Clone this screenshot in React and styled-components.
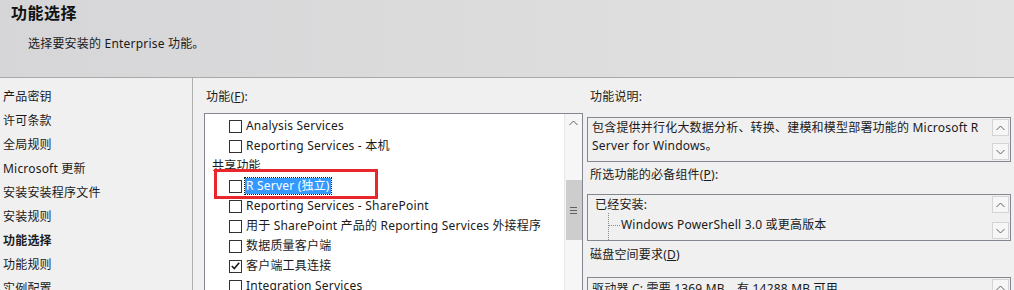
import styled, { createGlobalStyle } from 'styled-components';

const GlobalStyle = createGlobalStyle`
  html, body {
    margin: 0;
    padding: 0;
    background: #f0f0f0;
    overflow: hidden;
  }
  body {
    font-family: "Noto Sans", "Noto Sans CJK SC", sans-serif;
    font-size: 12px;
    letter-spacing: 0.2px;
    color: #1a1a1a;
  }
  * { box-sizing: border-box; }
`;

const Page = styled.div`
  width: 1014px;
  height: 290px;
  display: flex;
  flex-direction: column;
  overflow: hidden;
`;

const Header = styled.div`
  height: 78px;
  flex-shrink: 0;
  padding: 3px 11px 0;
  background: linear-gradient(to right, #d6d6d8, #e2e2e2);
  border-bottom: 1px solid #a9a9a9;
`;

const Title = styled.div`
  font-size: 16px;
  font-weight: bold;
  line-height: 20px;
  letter-spacing: 0.5px;
  color: #111;
`;

const Subtitle = styled.div`
  margin: 13px 0 0 17px;
  line-height: 16px;
`;

const Body = styled.div`
  flex: 1;
  min-height: 0;
  display: flex;
  overflow: hidden;
`;

const Nav = styled.div`
  width: 193px;
  flex-shrink: 0;
  padding-top: 7px;
  border-right: 1px solid #b0b0b0;
`;

const NavItem = styled.div`
  line-height: 24px;
  padding-left: 3px;
  white-space: nowrap;
  font-weight: ${(p) => (p.$active ? 'bold' : 'normal')};
`;

const FeatureColumn = styled.div`
  width: 379px;
  flex-shrink: 0;
  margin-left: 11px;
  padding-top: 11px;
  display: flex;
  flex-direction: column;
`;

const FieldLabel = styled.div`
  line-height: 16px;
  padding-left: ${(p) => p.$indent || 0}px;
  margin-top: ${(p) => p.$top || 0}px;
  margin-bottom: ${(p) => p.$bottom || 0}px;
  white-space: nowrap;
  u { text-decoration: underline; }
`;

const ListBox = styled.div`
  position: relative;
  flex: 1;
  display: flex;
  background: #fff;
  border: 1px solid #828790;
  border-bottom: none;
`;

const ListRows = styled.div`
  flex: 1;
  padding-top: 2px;
  overflow: hidden;
`;

const Row = styled.div`
  height: 20px;
  display: flex;
  align-items: center;
  padding-left: ${(p) => p.$indent}px;
  white-space: nowrap;
`;

const Checkbox = styled.span`
  width: 13px;
  height: 13px;
  flex-shrink: 0;
  margin-right: 3px;
  border: 1px solid #333;
  background: #fff;
  display: flex;
  align-items: center;
  justify-content: center;
`;

const ItemText = styled.span`
  line-height: 16px;
  padding: 0 1px;
  background: ${(p) => (p.$selected ? '#3399ff' : 'transparent')};
  color: ${(p) => (p.$selected ? '#fff' : 'inherit')};
  outline: ${(p) => (p.$selected ? '1px dotted #1a1a1a' : 'none')};
`;

const Annotation = styled.div`
  position: absolute;
  left: 9px;
  top: 55px;
  width: 164px;
  height: 30px;
  border: 3px solid #e8262b;
  pointer-events: none;
`;

const ScrollTrack = styled.div`
  width: 18px;
  flex-shrink: 0;
  display: flex;
  flex-direction: column;
  align-items: center;
  background: ${(p) => (p.$light ? '#f6f6f6' : '#f0f0f0')};
  border-left: 1px solid ${(p) => (p.$light ? '#e6e6e6' : '#f0f0f0')};
`;

const ScrollButton = styled.div`
  width: 17px;
  height: 17px;
  flex-shrink: 0;
  display: flex;
  align-items: center;
  justify-content: center;
  border: 1px solid ${(p) => (p.$framed ? '#d4d4d4' : 'transparent')};
  background: ${(p) => (p.$framed ? '#f6f6f6' : 'transparent')};
`;

const ScrollGap = styled.div`
  flex: 1;
`;

const Thumb = styled.div`
  width: 16px;
  height: 60px;
  margin-top: ${(p) => p.$offset}px;
  background: #cdcdcd;
  display: flex;
  align-items: center;
  justify-content: center;
`;

const InfoColumn = styled.div`
  flex: 1;
  margin: 0 3px 0 4px;
  padding-top: 11px;
  display: flex;
  flex-direction: column;
  min-width: 0;
`;

const InfoBox = styled.div`
  height: ${(p) => (p.$height ? `${p.$height}px` : 'auto')};
  flex: ${(p) => (p.$height ? '0 0 auto' : '1')};
  display: flex;
  border: 1px solid #828790;
  border-bottom: ${(p) => (p.$open ? 'none' : '1px solid #828790')};
  background: #f0f0f0;
`;

const InfoText = styled.div`
  flex: 1;
  padding: ${(p) => p.$pad || '2px 4px'};
  line-height: ${(p) => p.$line || 16}px;
  overflow: hidden;
`;

const BoxScroll = styled.div`
  width: 17px;
  flex-shrink: 0;
  margin: 1px 1px 1px 0;
  display: flex;
  flex-direction: column;
`;

const TreeBranch = styled.div`
  margin-left: 13px;
  padding-top: 4px;
  height: 27px;
  border-left: 1px dotted #8a8a8a;
`;

const TreeLeaf = styled.div`
  display: flex;
  align-items: center;
  line-height: 16px;
  white-space: nowrap;
`;

const Connector = styled.span`
  width: 11px;
  margin-right: 1px;
  border-top: 1px dotted #8a8a8a;
`;

const Chevron = ({ down }) => (
  <svg width="9" height="6" viewBox="0 0 9 6">
    <polyline
      points={down ? '0.5,1 4.5,5 8.5,1' : '0.5,5 4.5,1 8.5,5'}
      fill="none"
      stroke="#606060"
      strokeWidth="1"
    />
  </svg>
);

const Grip = () => (
  <svg width="7" height="7" viewBox="0 0 7 7">
    <rect x="0" y="0" width="7" height="1" fill="#606060" />
    <rect x="0" y="3" width="7" height="1" fill="#606060" />
    <rect x="0" y="6" width="7" height="1" fill="#606060" />
  </svg>
);

const Check = () => (
  <svg width="9" height="8" viewBox="0 0 9 8">
    <polyline points="0.8,4 3.3,6.5 8.2,0.8" fill="none" stroke="#1a1a1a" strokeWidth="1.6" />
  </svg>
);

const navItems = [
  '产品密钥',
  '许可条款',
  '全局规则',
  'Microsoft 更新',
  '安装安装程序文件',
  '安装规则',
  '功能选择',
  '功能规则',
  '实例配置',
];

const features = [
  { label: 'Analysis Services' },
  { label: 'Reporting Services - 本机' },
  { label: '共享功能', group: true },
  { label: 'R Server (独立)', selected: true },
  { label: 'Reporting Services - SharePoint' },
  { label: '用于 SharePoint 产品的 Reporting Services 外接程序' },
  { label: '数据质量客户端' },
  { label: '客户端工具连接', checked: true },
  { label: 'Integration Services' },
];

function BoxScrollbar() {
  return (
    <BoxScroll>
      <ScrollButton $framed>
        <Chevron />
      </ScrollButton>
      <ScrollGap />
      <ScrollButton $framed>
        <Chevron down />
      </ScrollButton>
    </BoxScroll>
  );
}

export default function App() {
  return (
    <Page>
      <GlobalStyle />
      <Header>
        <Title>功能选择</Title>
        <Subtitle>选择要安装的 Enterprise 功能。</Subtitle>
      </Header>
      <Body>
        <Nav>
          {navItems.map((item) => (
            <NavItem key={item} $active={item === '功能选择'}>
              {item}
            </NavItem>
          ))}
        </Nav>

        <FeatureColumn>
          <FieldLabel $indent={2} $bottom={8}>
            功能(<u>F</u>):
          </FieldLabel>
          <ListBox>
            <ListRows>
              {features.map((f) =>
                f.group ? (
                  <Row key={f.label} $indent={6}>
                    <ItemText>{f.label}</ItemText>
                  </Row>
                ) : (
                  <Row key={f.label} $indent={24}>
                    <Checkbox>{f.checked && <Check />}</Checkbox>
                    <ItemText $selected={f.selected}>{f.label}</ItemText>
                  </Row>
                )
              )}
            </ListRows>
            <ScrollTrack $light>
              <ScrollButton>
                <Chevron />
              </ScrollButton>
              <Thumb $offset={49}>
                <Grip />
              </Thumb>
            </ScrollTrack>
            <Annotation />
          </ListBox>
        </FeatureColumn>

        <InfoColumn>
          <FieldLabel $indent={3} $bottom={12}>
            功能说明:
          </FieldLabel>
          <InfoBox $height={45}>
            <InfoText $line={18} $pad="1px 4px">
              包含提供并行化大数据分析、转换、建模和模型部署功能的 Microsoft R Server for Windows。
            </InfoText>
            <BoxScrollbar />
          </InfoBox>

          <FieldLabel $indent={3} $top={5} $bottom={11}>
            所选功能的必备组件(<u>P</u>):
          </FieldLabel>
          <InfoBox $height={47}>
            <InfoText $pad="2px 7px 0 7px">
              <div>已经安装:</div>
              <TreeBranch>
                <TreeLeaf>
                  <Connector />
                  Windows PowerShell 3.0 或更高版本
                </TreeLeaf>
              </TreeBranch>
            </InfoText>
            <BoxScrollbar />
          </InfoBox>

          <FieldLabel $indent={3} $top={6} $bottom={14}>
            磁盘空间要求(<u>D</u>)
          </FieldLabel>
          <InfoBox $open>
            <InfoText $pad="3px 4px">驱动器 C: 需要 1369 MB，有 14288 MB 可用</InfoText>
            <BoxScrollbar />
          </InfoBox>
        </InfoColumn>
      </Body>
    </Page>
  );
}
